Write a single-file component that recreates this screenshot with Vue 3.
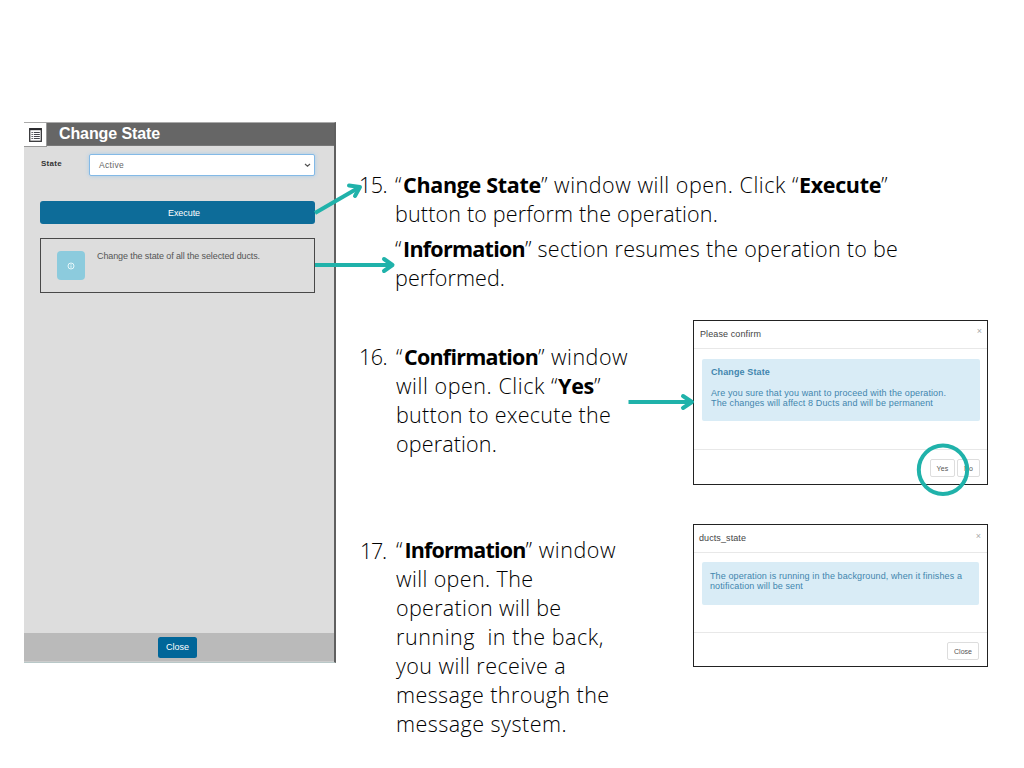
<script setup>
const quoteOpen = '“'
const steps = [
  {
    number: '15.', width: 28, name: 'execute',
    lines: [
      [{ t: quoteOpen, w: 8 }, { t: 'Change State', w: 138, b: true }, { t: '” window will open. Click “', w: 258 }, { t: 'Execute', w: 82, b: true }, { t: '”', w: 8 }],
      [{ t: 'button to perform the operation.', w: 323 }],
      [{ t: quoteOpen, w: 8 }, { t: 'Information', w: 122, b: true }, { t: '” section resumes the operation to be', w: 373 }],
      [{ t: 'performed.', w: 110 }],
    ],
  },
  {
    number: '16.', width: 28, name: 'confirm',
    lines: [
      [{ t: quoteOpen, w: 8 }, { t: 'Confirmation', w: 134, b: true }, { t: '” window', w: 90 }],
      [{ t: 'will open. Click “', w: 162 }, { t: 'Yes', w: 36, b: true }, { t: '”', w: 8 }],
      [{ t: 'button to execute the', w: 215 }],
      [{ t: 'operation.', w: 101 }],
    ],
    dialog: {
      title: 'Please confirm', titleWidth: 61,
      heading: 'Change State',
      body: [
        { t: 'Are you sure that you want to proceed with the operation.', w: 235 },
        { t: 'The changes will affect 8 Ducts and will be permanent', w: 222 },
      ],
      buttons: [{ t: 'Yes', w: 12 }, { t: 'No', w: 9 }],
    },
  },
  {
    number: '17.', width: 26, name: 'notice',
    lines: [
      [{ t: quoteOpen, w: 8.5 }, { t: 'Information', w: 121, b: true }, { t: '” window', w: 90.5 }],
      [{ t: 'will open. The', w: 137.5 }],
      [{ t: 'operation will be', w: 165.5 }],
      [{ t: 'running  in the back,', w: 208 }],
      [{ t: 'you will receive a', w: 170 }],
      [{ t: 'message through the', w: 213.5 }],
      [{ t: 'message system.', w: 171 }],
    ],
    dialog: {
      title: 'ducts_state', titleWidth: 47,
      body: [
        { t: 'The operation is running in the background, when it finishes a', w: 252 },
        { t: 'notification will be sent', w: 93 },
      ],
      buttons: [{ t: 'Close', w: 18 }],
    },
  },
]

// Tracks a run of text so that it fills the given width.
const vFit = {
  mounted(el, { value }) {
    const natural = el.getBoundingClientRect().width
    el.style.letterSpacing = `${(value - natural) / el.textContent.length}px`
  },
}
</script>

<template>
  <main class="slide">
    <section class="panel">
      <header class="panel-head">
        <span class="menu">
          <svg width="13" height="14" viewBox="0 0 13 14">
            <rect x="0.7" y="0.7" width="11.6" height="12.6" fill="#fff" stroke="#343437" stroke-width="1.3" />
            <path d="M0.5 1.2h12" stroke="#29292d" stroke-width="2" />
            <path d="M2.5 4.5h1.3M2.5 6.5h1.3M2.5 8.5h1.3M2.5 10.5h1.3M4.8 4.5h6M4.8 6.5h6M4.8 8.5h6M4.8 10.5h6" stroke="#45454b" stroke-width="1" />
          </svg>
        </span>
        <h1><span v-fit="101">Change State</span></h1>
      </header>
      <div class="panel-body">
        <div class="field">
          <label><span v-fit="21">State</span></label>
          <div class="select">
            <span v-fit="25">Active</span>
            <svg width="7" height="5" viewBox="0 0 7 5"><path d="M1 1l2.5 2.2L6 1" fill="none" stroke="#555" stroke-width="1.2" /></svg>
          </div>
        </div>
        <button class="run"><span v-fit="32">Execute</span></button>
        <div class="info">
          <span class="info-icon">
            <svg width="8" height="8" viewBox="0 0 8 8"><circle cx="4" cy="4" r="3" fill="none" stroke="#e5f7fa" /><path d="M4 2v.8M4 3.5v2.3" stroke="#e5f7fa" /></svg>
          </span>
          <p><span v-fit="163">Change the state of all the selected ducts.</span></p>
        </div>
      </div>
      <footer class="panel-foot"><button><span v-fit="23">Close</span></button></footer>
    </section>

    <div class="steps">
      <article v-for="s in steps" :key="s.number" class="step" :class="s.name">
        <div class="num"><span v-fit="s.width">{{ s.number }}</span></div>
        <div class="copy">
          <div v-for="(line, i) in s.lines" :key="i" class="line">
            <span v-for="(r, j) in line" :key="j" v-fit="r.w" :class="{ bold: r.b }">{{ r.t }}</span>
          </div>
        </div>
        <div v-if="s.dialog" class="dialog">
          <header><span v-fit="s.dialog.titleWidth">{{ s.dialog.title }}</span><i>×</i></header>
          <div class="dialog-body">
            <div class="alert">
              <strong v-if="s.dialog.heading"><span v-fit="59">{{ s.dialog.heading }}</span></strong>
              <div v-for="l in s.dialog.body" :key="l.t"><span v-fit="l.w">{{ l.t }}</span></div>
            </div>
          </div>
          <footer><button v-for="b in s.dialog.buttons" :key="b.t"><span v-fit="b.w">{{ b.t }}</span></button></footer>
        </div>
      </article>
    </div>

    <svg class="marks" width="1024" height="768" viewBox="0 0 1024 768" fill="none" stroke="#20b2aa" stroke-width="4">
      <path d="M315 213L359 187.5" />
      <path d="M349 185.5L360 187L355 196" stroke-linecap="round" stroke-linejoin="round" />
      <path d="M315 265H392" />
      <path d="M384 259L392.5 265L384 271" stroke-linecap="round" stroke-linejoin="round" />
      <path d="M628.5 402H691" />
      <path d="M683 396L692 402L683 408" stroke-linecap="round" stroke-linejoin="round" />
      <circle cx="943" cy="469.8" r="24.2" />
    </svg>
  </main>
</template>

<style>
body { margin: 0; background: #fff; }
</style>

<style scoped>
* { box-sizing: border-box; }
.slide { position: relative; width: 1024px; height: 768px; overflow: hidden; display: flex; background: #fff; font-family: "Liberation Sans", Arial, sans-serif; }
span { white-space: pre; }
h1, p { margin: 0; }
button { font-family: inherit; padding: 0; display: flex; align-items: center; justify-content: center; }

.panel { width: 312px; height: 541px; margin: 122px 0 0 24px; display: flex; flex-direction: column; background: #ddd; border-right: 2px solid #606060; border-bottom: 1px solid #b8c8c8; border-top: 1px solid #aaa; flex: none; }
.panel-head { display: flex; height: 23px; background: #666; flex: none; border-bottom: 1px solid #777; }
.menu { width: 23px; height: 24px; background: #fff; border: solid #999; border-width: 0 1px 1px 0; display: flex; align-items: center; justify-content: center; flex: none; }
h1 { font-size: 16px; line-height: 21px; color: #fff; margin-left: 12px; }
.panel-body { flex: 1; padding: 8px 19px 0 16px; }
.field { display: flex; }
label { width: 49px; padding-left: 1px; font-size: 8px; font-weight: bold; line-height: 20px; color: #333; }
.select { width: 226px; height: 22px; background: #fff; border: 1px solid #83b9e6; border-radius: 2px; box-shadow: 0 0 4px #a9cdea; display: flex; align-items: center; justify-content: space-between; padding: 0 3px 0 9px; font-size: 8.5px; color: #666; }
.run { width: 275px; height: 23px; margin-top: 25px; padding-left: 13px; background: #0d6c99; color: #fff; border: 0; border-radius: 3px; font-size: 9px; }
.info { width: 275px; height: 55px; margin-top: 14px; border: 1px solid #484848; display: flex; padding: 12px 0 0 16px; }
.info-icon { width: 28px; height: 29px; border-radius: 4px; background: #8ccbdd; display: flex; align-items: center; justify-content: center; }
.info p { font-size: 9px; line-height: 11px; color: #555; margin-left: 12px; }
.panel-foot { height: 29px; background: #bababa; display: flex; justify-content: center; padding: 4px 3px 0 0; border-bottom: 1px solid #ccc; }
.panel-foot button { width: 39px; height: 21px; padding-bottom: 1px; background: #006699; color: #fff; border: 0; border-radius: 2.5px; font-size: 9px; }

.steps { margin-left: 24px; width: 628px; padding-top: 170px; flex: none; }
.step { display: flex; font-family: "Open Sans", "Noto Sans", sans-serif; font-size: 21.5px; font-weight: 330; line-height: 29px; color: #000; }
.num { width: 35px; flex: none; }
.execute .num, .confirm .num { margin-left: -1px; width: 36px; }
.line { display: flex; height: 29px; }
.bold { font-weight: 700; }
.execute { height: 150px; }
.execute .line:nth-child(3) { margin-top: 6px; }
.confirm { height: 204px; }
.confirm .num, .confirm .copy { padding-top: 22px; }
.confirm .copy, .notice .copy { margin-left: 1px; }
.notice .copy { padding-top: 11px; }
.notice .num { padding-top: 12px; }

.dialog { width: 295px; height: 165px; margin-left: auto; border: 1px solid #222; font-family: "Liberation Sans", Arial, sans-serif; font-weight: 400; background: #fff; display: flex; flex-direction: column; line-height: 10px; }
.dialog header { height: 28px; flex: none; display: flex; justify-content: space-between; align-items: center; padding: 0 5px 2px 6px; border-bottom: 1px solid #e8e8e8; font-size: 9px; color: #444; }
.dialog header i { font-style: normal; color: #aaa; font-size: 9px; margin-top: -5px; }
.dialog-body { flex: 1; padding: 10px 7px 0 8px; }
.alert { height: 62px; background: #d9ecf6; border-radius: 2px; color: #4286ae; padding: 8px 9px; font-size: 9px; }
.alert strong { display: block; margin-bottom: 11px; }
.dialog footer { height: 35px; border-top: 1px solid #e8e8e8; display: flex; justify-content: flex-end; gap: 2px; padding: 9px 7px 0 0; }
.dialog footer button { width: 25px; height: 18px; border: 1px solid #ddd; border-radius: 2px; background: #fff; color: #555; font-size: 7px; }
.dialog footer button:nth-child(2) { width: 23px; }
.notice .dialog { height: 143px; }
.notice .dialog header { padding: 0 6px 1px 5px; height: 28px; }
.notice .dialog-body { padding: 9px 8px 0; }
.notice .alert { height: 43px; padding: 9px 0 0 8px; }
.notice .dialog footer { padding-right: 8px; height: 34px; }
.notice .dialog footer button { width: 32px; }
.marks { position: absolute; left: 0; top: 0; pointer-events: none; }
</style>
